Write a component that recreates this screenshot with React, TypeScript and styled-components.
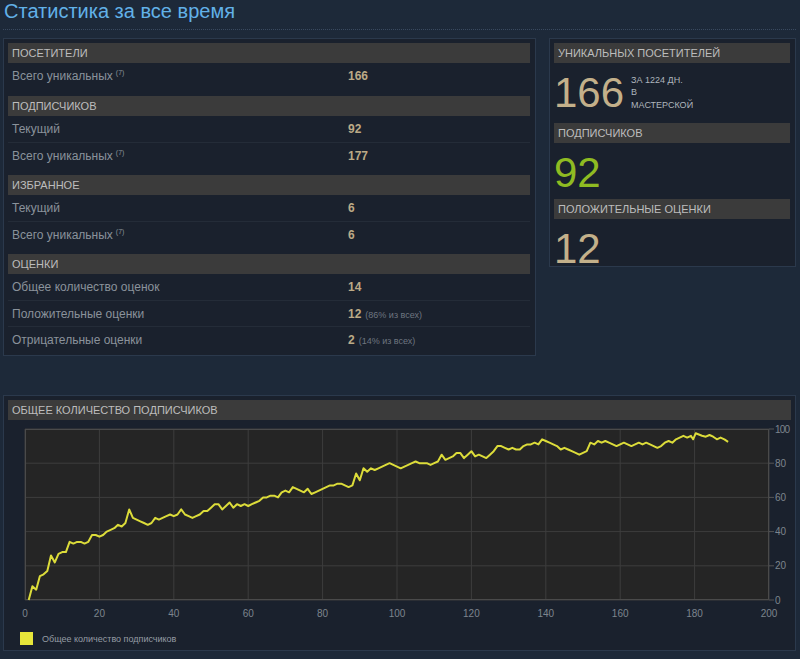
import styled, { createGlobalStyle } from 'styled-components';

const GlobalStyle = createGlobalStyle`
  html, body {
    margin: 0;
    background: #1d2939;
  }
  body {
    font-family: "Liberation Sans", Arial, sans-serif;
  }
`;

const Page = styled.div`
  width: 800px;
  height: 659px;
  box-sizing: border-box;
  padding: 0 4px 0 3px;
  overflow: hidden;
`;

const Title = styled.h2`
  margin: 0;
  padding: 0 0 7px 1px;
  font-size: 20px;
  line-height: 22px;
  font-weight: normal;
  color: #62b1e8;
  border-bottom: 1px dotted #3a4a60;
`;

const TopRow = styled.div`
  display: flex;
  align-items: flex-start;
  gap: 13px;
  margin-top: 8px;
`;

const Panel = styled.section<{ $width?: number; $height?: number }>`
  box-sizing: border-box;
  width: ${p => (p.$width ? `${p.$width}px` : 'auto')};
  height: ${p => (p.$height ? `${p.$height}px` : 'auto')};
  overflow: hidden;
  background: #1a212d;
  border: 1px solid #2b394c;
  padding: 4px 5px 3px 4px;
`;

const Header = styled.div`
  height: 20px;
  line-height: 21px;
  padding-left: 4px;
  background: #3b3b3b;
  color: #bdbdbd;
  font-size: 11px;
  text-transform: uppercase;
`;

const Section = styled.div`
  & + & {
    margin-top: 7px;
  }
`;

const Row = styled.div`
  display: grid;
  grid-template-columns: 336px 1fr;
  align-items: center;
  height: 26px;
  padding-left: 4px;
  font-size: 12px;

  & + & {
    border-top: 1px solid #242c38;
    height: 25px;
  }
`;

const Label = styled.span`
  color: #8a929b;

  sup {
    font-size: 7px;
    margin-left: 3px;
  }
`;

const Value = styled.span`
  color: #bcaa86;
  font-weight: bold;
  font-size: 12px;

  small {
    color: #6e7680;
    font-weight: normal;
    font-size: 9px;
    margin-left: 4px;
  }
`;

const BigStat = styled.div<{ $after: number }>`
  display: flex;
  align-items: flex-start;
  padding: 5px 0 ${p => p.$after}px 0;
`;

const BigNumber = styled.div<{ $color: string }>`
  font-size: 42px;
  line-height: 50px;
  color: ${p => p.$color};
`;

const Note = styled.div`
  margin: 6px 0 0 7px;
  font-size: 9px;
  line-height: 12.3px;
  color: #aeb5bc;
  text-transform: uppercase;
`;

const ChartPanel = styled(Panel)`
  margin-top: 39px;
  padding: 4px 4px 2px 4px;
`;

const ChartSvg = styled.svg`
  display: block;
  overflow: visible;
  font-family: "Liberation Sans", Arial, sans-serif;
`;

type Stat = { label: string; value: string; sup?: boolean; extra?: string };

const sections: { title: string; rows: Stat[] }[] = [
  { title: 'Посетители', rows: [{ label: 'Всего уникальных', value: '166', sup: true }] },
  {
    title: 'Подписчиков',
    rows: [
      { label: 'Текущий', value: '92' },
      { label: 'Всего уникальных', value: '177', sup: true },
    ],
  },
  {
    title: 'Избранное',
    rows: [
      { label: 'Текущий', value: '6' },
      { label: 'Всего уникальных', value: '6', sup: true },
    ],
  },
  {
    title: 'Оценки',
    rows: [
      { label: 'Общее количество оценок', value: '14' },
      { label: 'Положительные оценки', value: '12', extra: '(86% из всех)' },
      { label: 'Отрицательные оценки', value: '2', extra: '(14% из всех)' },
    ],
  },
];

// subscribers per day, read off the graph
const series: [number, number][] = [
  [1, 0], [2, 8], [3, 6], [4, 14], [5, 15], [6, 17], [7, 26], [8, 22], [9, 27], [10, 28],
  [11, 28], [12, 34], [13, 33], [14, 34], [15, 34], [16, 33], [17, 34], [18, 38], [19, 38], [20, 37],
  [21, 38], [22, 40], [23, 41], [24, 42], [25, 44], [26, 43], [27, 45], [28, 53], [29, 48], [30, 47],
  [31, 46], [32, 45], [33, 44], [34, 45], [35, 48], [36, 47], [37, 48], [38, 49], [39, 50], [40, 49],
  [41, 50], [42, 53], [43, 50], [44, 49], [45, 48], [46, 49], [47, 50], [48, 52], [49, 52], [50, 54],
  [51, 56], [52, 56], [53, 53], [54, 55], [55, 57], [56, 54], [57, 56], [58, 55], [59, 56], [60, 55],
  [61, 56], [62, 57], [63, 58], [64, 60], [65, 60], [66, 61], [67, 61], [68, 60], [69, 63], [70, 64],
  [71, 63], [72, 66], [73, 65], [74, 64], [75, 63], [76, 65], [77, 62], [78, 63], [79, 64], [80, 65],
  [81, 66], [82, 67], [83, 67], [84, 68], [85, 68], [86, 67], [87, 66], [88, 67], [89, 74], [90, 70],
  [91, 77], [92, 75], [93, 77], [94, 76], [95, 77], [96, 78], [97, 79], [98, 80], [99, 79], [100, 78],
  [101, 77], [102, 78], [103, 79], [104, 80], [105, 81], [106, 80], [107, 80], [108, 80], [109, 79], [110, 80],
  [111, 81], [112, 85], [113, 82], [114, 83], [115, 84], [116, 86], [117, 86], [118, 83], [119, 85], [120, 87],
  [121, 84], [122, 85], [123, 84], [124, 83], [125, 85], [126, 87], [127, 90], [128, 90], [129, 89], [130, 88],
  [131, 89], [132, 88], [133, 88], [134, 90], [135, 91], [136, 91], [137, 92], [138, 91], [139, 94], [140, 93],
  [141, 92], [142, 91], [143, 90], [144, 88], [145, 89], [146, 88], [147, 87], [148, 86], [149, 85], [150, 86],
  [151, 87], [152, 92], [153, 91], [154, 93], [155, 92], [156, 93], [157, 92], [158, 91], [159, 90], [160, 91],
  [161, 92], [162, 91], [163, 90], [164, 91], [165, 92], [166, 91], [167, 92], [168, 91], [169, 90], [170, 89],
  [171, 90], [172, 92], [173, 93], [174, 92], [175, 94], [176, 95], [177, 96], [178, 95], [179, 96], [179.6, 94],
  [180.3, 97.5], [182, 96], [183, 95.5], [184, 96.5], [185, 95.5], [186, 94], [187, 95], [188, 94], [189, 92.5],
];

const PLOT = { left: 17, right: 761, top: 9, bottom: 180 };
const px = (d: number) => PLOT.left + ((PLOT.right - PLOT.left) * d) / 200;
const py = (v: number) => PLOT.bottom - ((PLOT.bottom - PLOT.top) * v) / 100;

const SubscribersChart = () => {
  const xTicks = Array.from({ length: 11 }, (_, i) => i * 20);
  const yTicks = Array.from({ length: 6 }, (_, i) => i * 20);
  const points = series.map(([d, v]) => `${px(d).toFixed(1)},${py(v).toFixed(1)}`).join(' ');

  return (
    <ChartSvg width={783} height={228} viewBox="0 0 783 228">
      <rect x={PLOT.left} y={PLOT.top} width={PLOT.right - PLOT.left} height={PLOT.bottom - PLOT.top} fill="#252525" />
      {xTicks.map(t => (
        <line key={`vx${t}`} x1={px(t)} x2={px(t)} y1={PLOT.top} y2={PLOT.bottom} stroke="#3d3d3d" strokeWidth={1} />
      ))}
      {yTicks.map(t => (
        <line key={`hy${t}`} x1={PLOT.left} x2={PLOT.right} y1={py(t)} y2={py(t)} stroke="#3d3d3d" strokeWidth={1} />
      ))}
      <rect
        x={PLOT.left + 0.5}
        y={PLOT.top + 0.5}
        width={PLOT.right - PLOT.left - 1}
        height={PLOT.bottom - PLOT.top - 1}
        fill="none"
        stroke="#4a4a4a"
      />
      {yTicks.map(t => (
        <g key={`yl${t}`}>
          <line x1={PLOT.right} x2={PLOT.right + 5} y1={py(t)} y2={py(t)} stroke="#555" />
          <text x={PLOT.right + 6} y={py(t) + 3.5} fontSize={10} fill="#7d858e" textLength={t === 100 ? 15 : undefined}>
            {t}
          </text>
        </g>
      ))}
      {xTicks.map(t => (
        <text key={`xl${t}`} x={px(t)} y={197} fontSize={10} fill="#7d858e" textAnchor="middle">
          {t}
        </text>
      ))}
      <polyline points={points} fill="none" stroke="#dcdc3a" strokeWidth={2} strokeLinejoin="round" />
      <rect x={12} y={212} width={13} height={13} fill="#e6e63a" />
      <text x={34} y={221.5} fontSize={9} fill="#959ca4">
        Общее количество подписчиков
      </text>
    </ChartSvg>
  );
};

export default function App() {
  return (
    <Page>
      <GlobalStyle />
      <Title>Статистика за все время</Title>
      <TopRow>
        <Panel $width={533}>
          {sections.map(section => (
            <Section key={section.title}>
              <Header>{section.title}</Header>
              {section.rows.map(row => (
                <Row key={row.label}>
                  <Label>
                    {row.label}
                    {row.sup && <sup>(7)</sup>}
                  </Label>
                  <Value>
                    {row.value}
                    {row.extra && <small>{row.extra}</small>}
                  </Value>
                </Row>
              ))}
            </Section>
          ))}
        </Panel>
        <Panel $width={247} $height={229}>
          <Header>Уникальных посетителей</Header>
          <BigStat $after={5}>
            <BigNumber $color="#c3b08a">166</BigNumber>
            <Note>
              за 1224 дн.
              <br />в
              <br />
              мастерской
            </Note>
          </BigStat>
          <Header>Подписчиков</Header>
          <BigStat $after={1}>
            <BigNumber $color="#8fbb22">92</BigNumber>
          </BigStat>
          <Header>Положительные оценки</Header>
          <BigStat $after={0}>
            <BigNumber $color="#c3b08a">12</BigNumber>
          </BigStat>
        </Panel>
      </TopRow>
      <ChartPanel>
        <Header>Общее количество подписчиков</Header>
        <SubscribersChart />
      </ChartPanel>
    </Page>
  );
}
